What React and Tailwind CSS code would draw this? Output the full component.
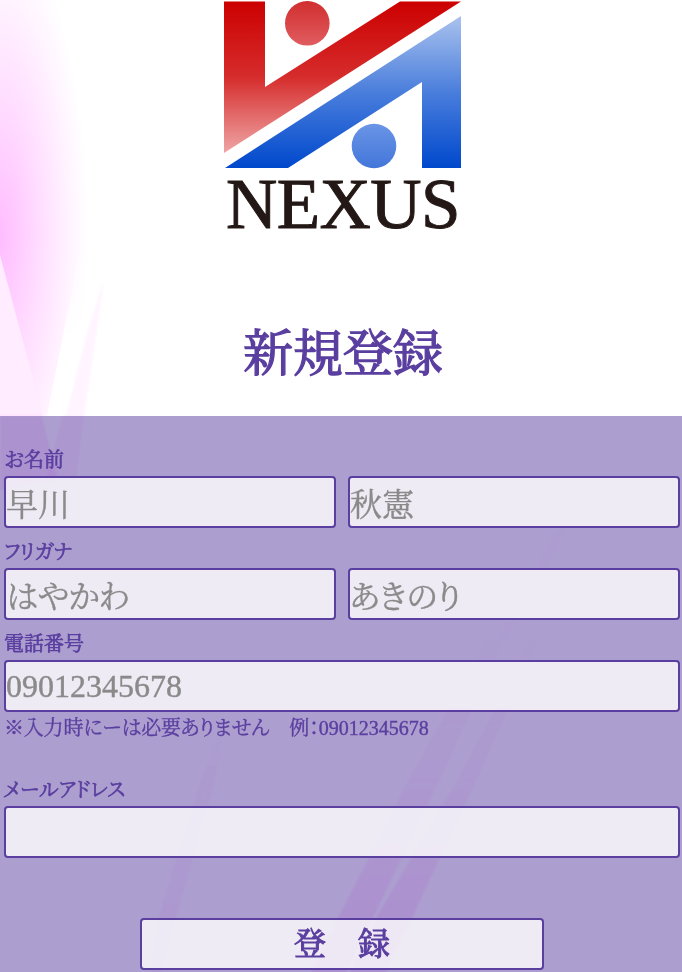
import React from 'react'

const fieldClass =
  "min-w-0 h-[52px] px-0 bg-white/80 border-2 border-[#5a3fa0] rounded-[4px] text-[32px] text-[#8a8a8a] outline-none [-webkit-text-stroke:0.4px_#8a8a8a]"

const labelClass = "block text-[20px] leading-6 mb-1 pt-px [-webkit-text-stroke:0.7px_#5a3fa0]"

function Backdrop() {
  return (
    <svg className="absolute inset-0 w-full h-full" viewBox="0 0 682 972" preserveAspectRatio="none" aria-hidden="true">
      <defs>
        <radialGradient id="pinkGlow" cx="0" cy="0" r="1" gradientUnits="userSpaceOnUse" gradientTransform="translate(0 235) scale(88 300)">
          <stop offset="0" stopColor="#ffbcff" />
          <stop offset="0.45" stopColor="#ffddff" />
          <stop offset="0.8" stopColor="#fff4ff" />
          <stop offset="1" stopColor="#ffffff" />
        </radialGradient>
        <linearGradient id="fadeWhite" x1="0" y1="225" x2="0" y2="340" gradientUnits="userSpaceOnUse">
          <stop offset="0" stopColor="#ffffff" stopOpacity="0" />
          <stop offset="1" stopColor="#ffffff" stopOpacity="1" />
        </linearGradient>
        <linearGradient id="streak" x1="0" y1="620" x2="0" y2="972" gradientUnits="userSpaceOnUse">
          <stop offset="0" stopColor="#ff60ff" stopOpacity="0.02" />
          <stop offset="0.6" stopColor="#ff60ff" stopOpacity="0.1" />
          <stop offset="1" stopColor="#ff60ff" stopOpacity="0.24" />
        </linearGradient>
        <linearGradient id="streakFaint" x1="0" y1="620" x2="0" y2="972" gradientUnits="userSpaceOnUse">
          <stop offset="0" stopColor="#ff60ff" stopOpacity="0.02" />
          <stop offset="1" stopColor="#ff60ff" stopOpacity="0.1" />
        </linearGradient>
        <filter id="soft"><feGaussianBlur stdDeviation="1.2" /></filter>
      </defs>
      <rect width="682" height="972" fill="#ffffff" />
      <rect x="0" y="0" width="120" height="416" fill="url(#pinkGlow)" />
      <polygon points="0,255 43,416 0,416" fill="#ffecff" />
      <polygon points="47,416 85,225 140,225 140,416" fill="url(#fadeWhite)" />
      <polygon points="66,416 88,330 104,280 84,416" fill="#fff4ff" filter="url(#soft)" />
      <g filter="url(#soft)">
        <polygon points="0,416 42,416 58,480 0,490" fill="#ff60ff" opacity="0.16" />
        <polygon points="62,416 84,416 76,480 46,480" fill="#ff60ff" opacity="0.1" />
        <polygon points="485,640 505,640 440,780 373,918 346,972 311,972 338,918 408,780" fill="url(#streak)" />
        <polygon points="530,640 540,640 477,780 412,918 386,972 350,972 376,918 457,780" fill="url(#streak)" />
        <polygon points="556,530 566,530 505,640 497,640" fill="#ff60ff" opacity="0.05" />
        <polygon points="216,740 222,740 216,780 176,918 162,972 150,972 158,918 200,780" fill="url(#streakFaint)" />
      </g>
    </svg>
  )
}

function Logo() {
  return (
    <div className="flex flex-col items-center w-[238px]">
      <svg width="238" height="170" viewBox="224 0 238 170" aria-hidden="true">
        <defs>
          <linearGradient id="redBar" x1="0" y1="1" x2="0" y2="153" gradientUnits="userSpaceOnUse">
            <stop offset="0" stopColor="#cc0000" />
            <stop offset="0.5" stopColor="#d62c2c" />
            <stop offset="1" stopColor="#efa5a5" />
          </linearGradient>
          <linearGradient id="blueBar" x1="0" y1="16" x2="0" y2="168" gradientUnits="userSpaceOnUse">
            <stop offset="0" stopColor="#aac2ee" />
            <stop offset="0.5" stopColor="#4a7edc" />
            <stop offset="1" stopColor="#0048cc" />
          </linearGradient>
          <linearGradient id="redDot" x1="0" y1="0" x2="0" y2="1">
            <stop offset="0" stopColor="#d12e2e" />
            <stop offset="1" stopColor="#e05c60" />
          </linearGradient>
          <linearGradient id="blueDot" x1="0" y1="0" x2="0" y2="1">
            <stop offset="0" stopColor="#6a95e6" />
            <stop offset="1" stopColor="#4376da" />
          </linearGradient>
        </defs>
        <polygon points="224,1.5 265,1.5 265,87 400,1.5 461,1.5 224,153" fill="url(#redBar)" />
        <polygon points="461,16 461,168 422,168 422,82 288,168 225,168" fill="url(#blueBar)" />
        <circle cx="307.3" cy="23.3" r="22.3" fill="url(#redDot)" />
        <circle cx="374" cy="146" r="22.3" fill="url(#blueDot)" />
      </svg>
      <div className="mt-[5px] font-['Liberation_Serif',serif] text-[71px] leading-[58px] text-[#231815] tracking-[-0.5px] [-webkit-text-stroke:1px_#231815]">NEXUS</div>
    </div>
  )
}

function Field({ value, className = '' }) {
  return <input type="text" readOnly defaultValue={value} className={`${fieldClass} ${className}`} />
}

export default function App() {
  return (
    <div className="relative w-full h-[972px] overflow-hidden font-['Liberation_Serif','Noto_Serif_CJK_JP','Noto_Sans_CJK_JP',serif] [font-feature-settings:'palt']">
      <Backdrop />
      <div className="relative">
        <header className="h-[416px] pl-1 flex flex-col items-center">
          <Logo />
          <h1 className="mt-[91px] text-[50px] leading-[60px] font-normal text-[#5a3fa0] [-webkit-text-stroke:1.3px_#5a3fa0]">新規登録</h1>
        </header>
        <form className="h-[556px] pl-1 pr-0.5 pt-[31px] bg-[#5a3fa0]/50 text-[#5a3fa0]">
          <label className={labelClass}>お名前</label>
          <div className="grid grid-cols-2 gap-3">
            <Field value="早川" />
            <Field value="秋憲" />
          </div>
          <label className={`${labelClass} mt-[11px]`}>フリガナ</label>
          <div className="grid grid-cols-2 gap-3">
            <Field value="はやかわ" className="tracking-[-0.7px]" />
            <Field value="あきのり" className="tracking-[-0.7px]" />
          </div>
          <label className={`${labelClass} mt-[11px]`}>電話番号</label>
          <Field value="09012345678" className="block w-full" />
          <p className="mt-1 text-[20px] leading-6 tracking-[-0.2px] [-webkit-text-stroke:0.4px_#5a3fa0]">※入力時にーは必要ありません　例：<span className="tracking-normal">09012345678</span></p>
          <label className={`${labelClass} mt-[37px]`}>メールアドレス</label>
          <Field value="" className="block w-full" />
          <button type="button" className="block w-[404px] h-[52px] mx-auto mt-[60px] bg-white/80 border-2 border-[#5a3fa0] rounded-[4px] text-[32px] leading-none font-normal text-[#5a3fa0] [-webkit-text-stroke:1px_#5a3fa0]">登　録</button>
        </form>
      </div>
    </div>
  )
}
